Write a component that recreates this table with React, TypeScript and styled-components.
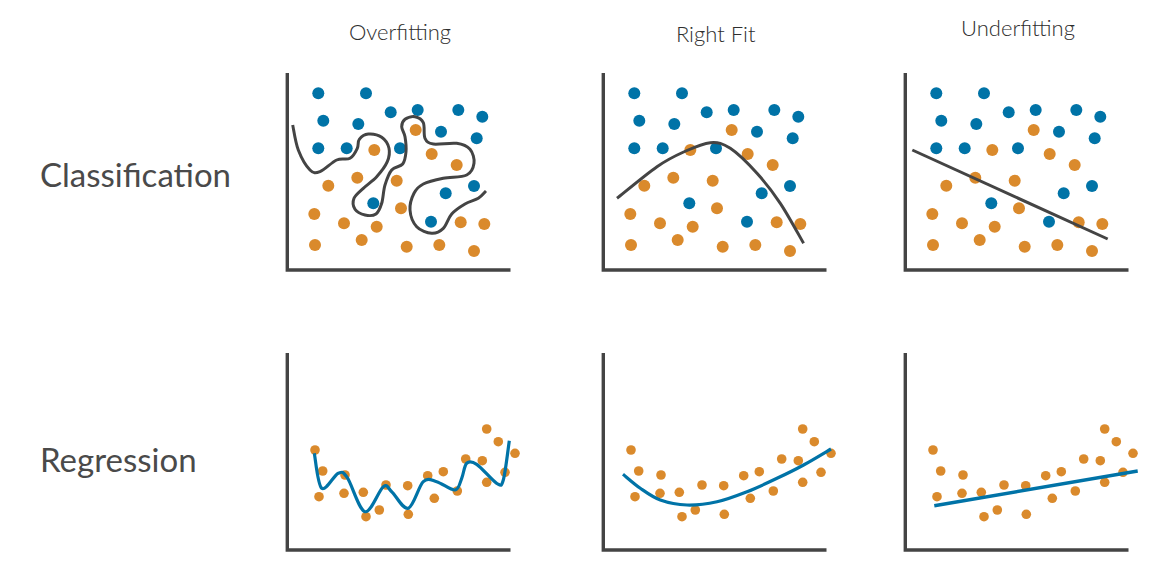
import React from 'react';
import styled, {createGlobalStyle} from 'styled-components';

type Pt = [number, number];
type Dot = [number, number, 'b' | 'o'];

const BLUE = '#0073a7';
const ORANGE = '#da8a2c';
const INK = '#444444';

// same scatter for every classification panel (panel-local coords)
const classDots: Dot[] = [
    [38.3, 25.3, 'b'], [86, 25.3, 'b'], [110.7, 44.3, 'b'], [137.7, 42, 'b'], [178.3, 42, 'b'],
    [202.3, 48.7, 'b'], [43.3, 52.7, 'b'], [78.3, 56, 'b'], [161, 63.7, 'b'], [196.7, 70.3, 'b'],
    [38.3, 80.3, 'b'], [66.7, 80.3, 'b'], [120, 80.3, 'b'], [194, 118, 'b'], [165.7, 125.3, 'b'],
    [93.3, 135.3, 'b'], [151, 153.7, 'b'],
    [135.7, 62, 'o'], [94.3, 82, 'o'], [151.7, 86, 'o'], [176.7, 97, 'o'], [77.3, 109.7, 'o'],
    [48.3, 117.7, 'o'], [116.7, 112.7, 'o'], [121, 140.3, 'o'], [34.3, 146, 'o'], [64, 155.3, 'o'],
    [96.7, 158.7, 'o'], [180.7, 154.3, 'o'], [204.3, 156, 'o'], [35, 177, 'o'], [81.7, 172, 'o'],
    [126.7, 178.7, 'o'], [159.3, 177, 'o'], [194, 183, 'o'],
];

const regDots: Dot[] = [
    [35, 102], [42.7, 123], [39, 148.7], [65, 127], [64, 145.3], [83.3, 144.3], [86, 168.7],
    [99.3, 162], [106, 137], [127.7, 137.7], [128.3, 166.3], [147.7, 127.7], [154.3, 150.3],
    [163.3, 123.7], [177.3, 143], [185.7, 111], [202.3, 112.7], [206.7, 81], [218.3, 93.7],
    [206.7, 134.3], [225, 124.3], [235, 105.3],
].map(([x, y]) => [x, y, 'o'] as Dot);

const overClass: Pt[] = [
    [12.7, 57], [18.3, 82], [30, 102], [40, 103.7], [56.7, 92], [70, 90.3], [77.3, 80.3], [79.3, 71.3],
    [88.3, 66], [101.7, 69.3], [109, 80.3], [107.3, 93.7], [96.7, 108.7], [83.3, 120.3], [74, 130.3],
    [75, 141.3], [85, 147], [96, 146], [101.7, 135.3], [105, 117], [111.7, 102], [122.7, 96],
    [126, 83.7], [125, 68.7], [121.7, 58.7], [125, 51.3], [135, 48.7], [143.3, 54.7], [145, 70.3],
    [153.3, 76], [176.7, 75.3], [190, 81.3], [194, 95.3], [186.7, 107], [163.3, 110.3], [143.3, 116],
    [134, 125.3], [130, 142], [136.7, 158.7], [151.7, 165.3], [163.3, 160.3], [171.7, 146],
    [185, 136], [198.3, 130.3], [206, 123],
];

const rightClass: Pt[] = [
    [21, 130.3], [61, 98.7], [87.6, 84], [114.3, 74.7], [134.3, 80.3], [161, 105.3], [184.3, 135.3], [207.6, 175.3],
];

const overReg: Pt[] = [
    [34.3, 105.3], [41.7, 140.3], [58.3, 125.3], [67.3, 129.7], [85, 163.7], [103.3, 138.7],
    [111.7, 143.7], [128.3, 160.3], [143.3, 133.7], [156.7, 133.7], [175, 142], [181.7, 130.3],
    [186.7, 115.3], [196.7, 116.3], [216.7, 135.3], [223.3, 132], [229.3, 92.7],
];

const rightReg: Pt[] = [
    [27, 126.3], [44.3, 140.3], [64.3, 152], [91, 157], [121, 153.7], [151, 143.7], [181, 130.3],
    [207.6, 117], [235, 101],
];

// catmull-rom through the points
const smooth = (pts: Pt[]) => {
    let d = `M${pts[0][0]} ${pts[0][1]}`;
    for (let i = 0; i < pts.length - 1; i++) {
        const p0 = pts[i - 1] || pts[i];
        const p1 = pts[i];
        const p2 = pts[i + 1];
        const p3 = pts[i + 2] || p2;
        const c1x = p1[0] + (p2[0] - p0[0]) / 6;
        const c1y = p1[1] + (p2[1] - p0[1]) / 6;
        const c2x = p2[0] - (p3[0] - p1[0]) / 6;
        const c2y = p2[1] - (p3[1] - p1[1]) / 6;
        d += ` C${c1x.toFixed(1)} ${c1y.toFixed(1)} ${c2x.toFixed(1)} ${c2y.toFixed(1)} ${p2[0]} ${p2[1]}`;
    }
    return d;
};

interface IChartProps {
    dots: Dot[];
    r: number;
    fit: string;
    fitColor: string;
    fitWidth: number;
}

const Chart = ({dots, r, fit, fitColor, fitWidth}: IChartProps) => (
    <Plot viewBox='0 0 248 210'>
        <path d='M7.3 5 V202 H230.5' fill='none' stroke={INK} strokeWidth={3.4}/>
        {dots.map(([x, y, k], i) => (
            <Dot key={i} cx={x} cy={y} r={r} $kind={k}/>
        ))}
        <path d={fit} fill='none' stroke={fitColor} strokeWidth={fitWidth} strokeLinecap='butt' strokeLinejoin='round'/>
    </Plot>
);

const titles = [
    {text: 'Overfitting', shift: 0},
    {text: 'Right Fit', shift: 2},
    {text: 'Underfitting', shift: -4},
];

const App = () => {
    return (
        <>
            <GlobalStyle/>
            <Page>
                <div/>
                {titles.map(t => (
                    <ColumnTitle key={t.text} $shift={t.shift}>{t.text}</ColumnTitle>
                ))}

                <RowLabel $top={86}>Classification</RowLabel>
                <Chart dots={classDots} r={6} fit={smooth(overClass)} fitColor={INK} fitWidth={3}/>
                <Chart dots={classDots} r={6} fit={smooth(rightClass)} fitColor={INK} fitWidth={3}/>
                <Chart dots={classDots} r={6} fit='M14.3 82 L209.7 171' fitColor={INK} fitWidth={3}/>

                <RowLabel $top={91}>Regression</RowLabel>
                <Chart dots={regDots} r={4.8} fit={smooth(overReg)} fitColor={BLUE} fitWidth={3.2}/>
                <Chart dots={regDots} r={4.8} fit={smooth(rightReg)} fitColor={BLUE} fitWidth={3.2}/>
                <Chart dots={regDots} r={4.8} fit='M36.3 157.7 L239.7 123' fitColor={BLUE} fitWidth={3.4}/>
            </Page>
        </>
    );
};

const GlobalStyle = createGlobalStyle`
  html, body {
    margin: 0;
    padding: 0;
    background: #ffffff;
  }

  body {
    font-family: Lato, "Noto Sans", "DejaVu Sans", sans-serif;
  }
`;

const Page = styled.div`
  display: grid;
  grid-template-columns: 280px 315.7px 302.3px 1fr;
  grid-template-rows: 68px 280px 210px;
  width: 1153px;
  height: 571px;
  overflow: hidden;
`;

const ColumnTitle = styled.div<{ $shift: number }>`
  width: 240px;
  padding-top: ${p => 17.5 + p.$shift}px;
  font-size: 22px;
  font-weight: 300;
  line-height: 28px;
  color: #2e2e2e;
  text-align: center;
  box-sizing: border-box;
`;

const RowLabel = styled.div<{ $top: number }>`
  padding: ${p => p.$top}px 0 0 40px;
  font-size: 33px;
  font-weight: 400;
  line-height: 40px;
  color: #4a4a4a;
  white-space: nowrap;
`;

const Plot = styled.svg`
  display: block;
  width: 248px;
  height: 210px;
  overflow: visible;
`;

const Dot = styled.circle<{ $kind: 'b' | 'o' }>`
  fill: ${p => (p.$kind === 'b' ? BLUE : ORANGE)};
`;

export default App;
